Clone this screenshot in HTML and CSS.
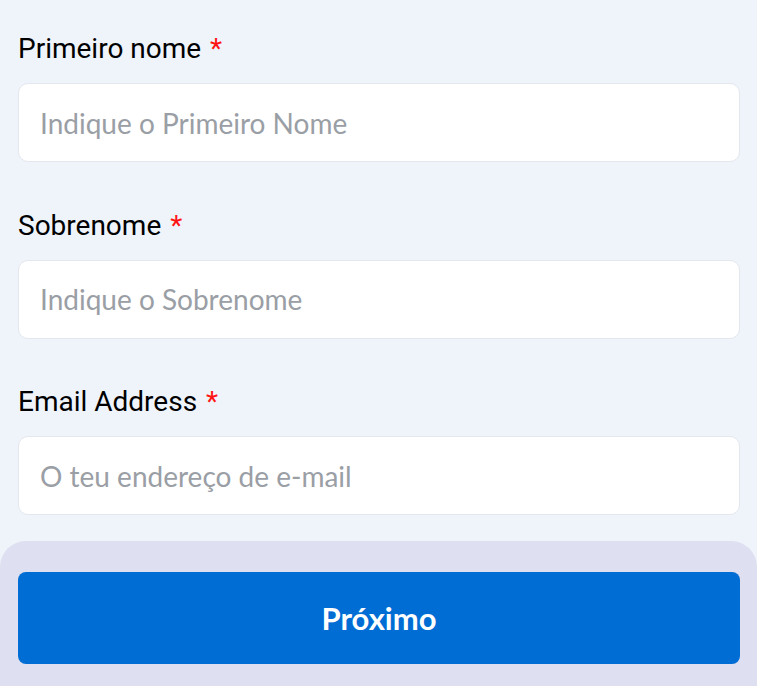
FILE: index.html
```html
<!DOCTYPE html>
<html lang="pt">
<head>
<meta charset="utf-8">
<link rel="stylesheet" href="styles.css">
</head>
<body>
<div class="page">
  <form class="form">
    <div class="field">
      <label class="label">Primeiro nome <span class="req">*</span></label>
      <input class="input" type="text" placeholder="Indique o Primeiro Nome">
    </div>
    <div class="field">
      <label class="label">Sobrenome <span class="req">*</span></label>
      <input class="input" type="text" placeholder="Indique o Sobrenome">
    </div>
    <div class="field">
      <label class="label">Email Address <span class="req">*</span></label>
      <input class="input" type="text" placeholder="O teu endereço de e-mail">
    </div>
  </form>
  <div class="footer">
    <button class="btn" type="button">Próximo</button>
  </div>
</div>
</body>
</html>
```
FILE: styles.css
```css
html, body {
  margin: 0;
  padding: 0;
  background: #eff4fb;
}
.page {
  width: 757px;
  height: 686px;
  display: flex;
  flex-direction: column;
  overflow: hidden;
}
.form {
  padding: 32px 17px 0 18px;
  display: flex;
  flex-direction: column;
  gap: 46.5px;
}
.field {
  display: flex;
  flex-direction: column;
  gap: 17px;
}
.label {
  font-family: Roboto, sans-serif;
  font-size: 28px;
  line-height: 34px;
  color: #000;
}
.req {
  color: #ff1414;
  margin-left: 2px;
}
.input {
  box-sizing: border-box;
  height: 79px;
  width: 100%;
  border: 1px solid #e4e7ed;
  border-radius: 10px;
  background: #fff;
  padding: 0 21px;
  font-family: Lato, sans-serif;
  font-size: 28px;
  color: #333;
  outline: none;
}
.input::placeholder {
  color: #9a9ea5;
}
.footer {
  margin-top: 26px;
  flex: 1;
  background: #dedff0;
  border-radius: 26px 26px 0 0;
  padding: 31px 17px 0 18px;
}
.btn {
  width: 100%;
  height: 92px;
  border: 0;
  border-radius: 8px;
  background: #006dd4;
  color: #fff;
  font-family: Lato, sans-serif;
  font-weight: 700;
  font-size: 31px;
  cursor: pointer;
}
```
